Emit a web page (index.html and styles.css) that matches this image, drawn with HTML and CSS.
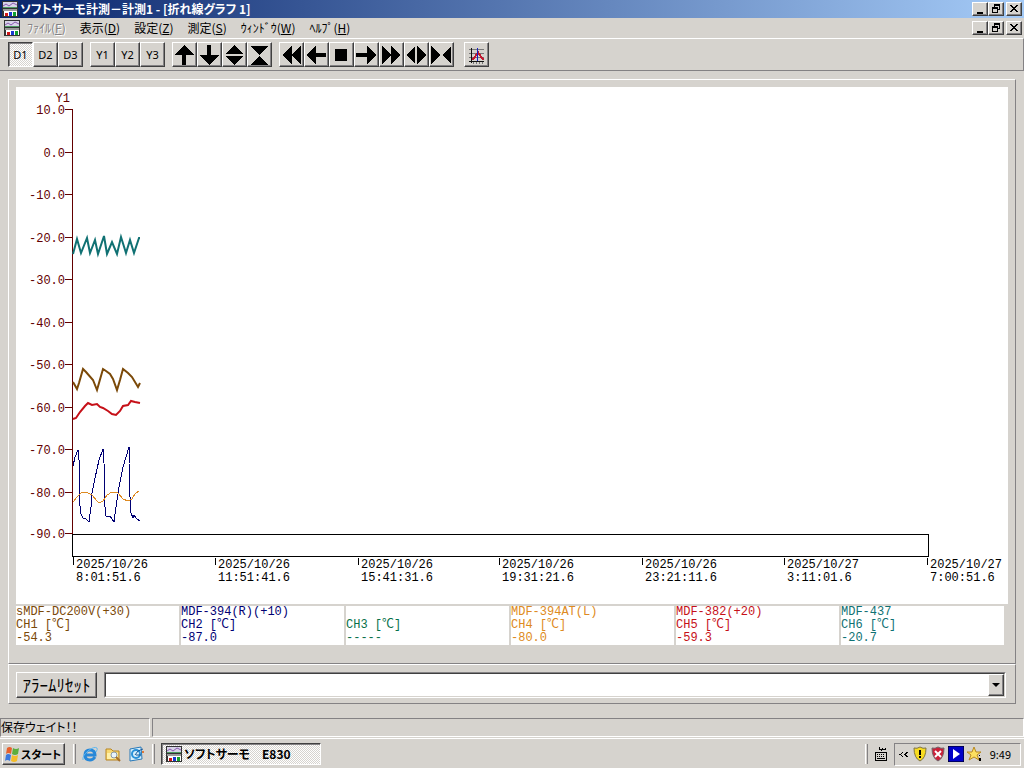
FILE: index.html
```html
<!DOCTYPE html>
<html lang="ja">
<head>
    <meta charset="UTF-8">
    <meta name="viewport" content="width=device-width, initial-scale=1">
    <title>ソフトサーモ E830</title>
    <link rel="stylesheet" href="styles.css">
</head>
<body>
    <svg class="defs" width="0" height="0" aria-hidden="true">
        <symbol id="app" viewBox="0 0 16 16">
            <path fill="#333" d="M0 0h16v16H0z"/>
            <path fill="#d8d4e8" d="M1 1h14v6H1z"/>
            <path fill="none" stroke="#8a58b0" d="M1 5l3-2 3 2 4-3 4 2"/>
            <path fill="none" stroke="#4c9a60" d="M1 6.500h14"/>
            <path fill="#9a9a9a" d="M1 8h14v2H1z"/>
            <path fill="#fff" d="M2 10h13v5H2z"/>
            <path fill="#d01818" d="M3 12h3v3H3z"/>
            <path fill="#1838d0" d="M7 11h3v4H7z"/>
            <path fill="#10a030" d="M11 11h3v4h-3z"/>
        </symbol>
        <symbol id="min" viewBox="0 0 12 10"><path d="M3 8h6v2H3z"/></symbol>
        <symbol id="restore" viewBox="0 0 12 10">
            <path fill-rule="evenodd" d="M4 0h6v6H8V9H2V3h2zM5 2v1h3v2h1V2zM3 5v3h4V5z"/>
        </symbol>
        <symbol id="close" viewBox="0 0 12 10">
            <path d="M2 1h2v1h1v1h2V2h1V1h2v1H9v1H8v1H7v1h1v1h1v1h1v1H8V7H7V6H5v1H4v1H2V7h1V6h1V5h1V4H4V3H3V2H2z"/>
        </symbol>
    </svg>

    <header class="titlebar">
        <svg class="app-icon"><use href="#app"/></svg>
        <h1>ソフトサーモ計測－計測1 - [折れ線グラフ 1]</h1>
        <div class="window-buttons">
            <button aria-label="最小化"><svg><use href="#min"/></svg></button>
            <button aria-label="元に戻す"><svg><use href="#restore"/></svg></button>
            <button class="close" aria-label="閉じる"><svg><use href="#close"/></svg></button>
        </div>
    </header>

    <nav class="menubar">
        <svg class="app-icon"><use href="#app"/></svg>
        <button disabled>ﾌｧｲﾙ(<u>F</u>)</button>
        <button>表示(<u>D</u>)</button>
        <button>設定(<u>Z</u>)</button>
        <button>測定(<u>S</u>)</button>
        <button>ｳｨﾝﾄﾞｳ(<u>W</u>)</button>
        <button>ﾍﾙﾌﾟ(<u>H</u>)</button>
        <div class="window-buttons">
            <button aria-label="最小化"><svg><use href="#min"/></svg></button>
            <button aria-label="元に戻す"><svg><use href="#restore"/></svg></button>
            <button class="close" aria-label="閉じる"><svg><use href="#close"/></svg></button>
        </div>
    </nav>

    <div class="toolbar">
        <div class="group">
            <button class="pressed">D1</button>
            <button>D2</button>
            <button>D3</button>
        </div>
        <div class="group">
            <button>Y1</button>
            <button>Y2</button>
            <button>Y3</button>
        </div>
        <div class="group">
            <button aria-label="上へ"><svg viewBox="0 0 22 22"><path d="M11 1l10 10h-8v10H9V11H1z"/></svg></button>
            <button aria-label="下へ"><svg viewBox="0 0 22 22"><path d="M11 21L1 11h8V1h4v10h8z"/></svg></button>
            <button aria-label="縦拡大"><svg viewBox="0 0 22 22"><path d="M11 1l9 9H2zM11 21l-9-9h18z"/></svg></button>
            <button aria-label="縦縮小"><svg viewBox="0 0 22 22"><path d="M2 2h18l-9 9zM2 21h18l-9-9z"/></svg></button>
        </div>
        <div class="group">
            <button aria-label="早戻し"><svg viewBox="0 0 22 22"><path d="M12 2v18l-10-9zM21 2v18l-10-9z"/></svg></button>
            <button aria-label="戻る"><svg viewBox="0 0 22 22"><path d="M1 11l10-9v7h10v4H11v7z"/></svg></button>
            <button aria-label="停止"><svg viewBox="0 0 22 22"><path d="M5 5h12v12H5z"/></svg></button>
            <button aria-label="進む"><svg viewBox="0 0 22 22"><path d="M21 11L12 2v7H1v4h11v7z"/></svg></button>
            <button aria-label="早送り"><svg viewBox="0 0 22 22"><path d="M2 2v18l10-9zM11 2v18l10-9z"/></svg></button>
            <button aria-label="横拡大"><svg viewBox="0 0 22 22"><path d="M10 2v18l-9-9zM12 2v18l9-9z"/></svg></button>
            <button aria-label="横縮小"><svg viewBox="0 0 22 22"><path d="M1 2v18l9-9zM21 2v18l-9-9z"/></svg></button>
        </div>
        <div class="group">
            <button aria-label="グラフ設定">
                <svg viewBox="0 0 22 22">
                    <path fill="none" stroke="#777" d="M4 5.500h15M4 9.500h15M4 13.500h15M8.500 18v2M11.500 18v2M14.500 18v2M17.500 18v2"/>
                    <path fill="none" stroke="#111" d="M6.500 4v15M4 17.500h15"/>
                    <path fill="none" stroke="#c01830" stroke-width="2" d="M7 16l3-3 3-5 3 5 3 3"/>
                    <path fill="none" stroke="#1820c0" d="M12.500 4v13"/>
                </svg>
            </button>
        </div>
    </div>

    <main>
        <section class="panel graph-panel">
            <svg class="chart" viewBox="0 0 992 517" role="img" aria-label="折れ線グラフ">
                <g class="y-axis">
                    <path d="M56.500 22v425M49 22.500h7M49 65.500h7M49 107.500h7M49 150.500h7M49 192.500h7M49 235.500h7M49 277.500h7M49 320.500h7M49 362.500h7M49 405.500h7M49 446.500h7"/>
                    <text x="54" y="15">Y1</text>
                    <text x="49" y="27">10.0</text>
                    <text x="49" y="70">0.0</text>
                    <text x="49" y="112">-10.0</text>
                    <text x="49" y="155">-20.0</text>
                    <text x="49" y="197">-30.0</text>
                    <text x="49" y="240">-40.0</text>
                    <text x="49" y="282">-50.0</text>
                    <text x="49" y="325">-60.0</text>
                    <text x="49" y="367">-70.0</text>
                    <text x="49" y="410">-80.0</text>
                    <text x="49" y="451">-90.0</text>
                </g>
                <g class="x-axis">
                    <rect x="56.500" y="447.500" width="856" height="22"/>
                    <path d="M57.500 470v8M199.500 471v7M342.500 471v7M483.500 471v7M626.500 471v7M768.500 471v7M911.500 471v7"/>
                    <text x="60" y="481">2025/10/26</text><text x="60" y="494">8:01:51.6</text>
                    <text x="202" y="481">2025/10/26</text><text x="202" y="494">11:51:41.6</text>
                    <text x="345" y="481">2025/10/26</text><text x="345" y="494">15:41:31.6</text>
                    <text x="486" y="481">2025/10/26</text><text x="486" y="494">19:31:21.6</text>
                    <text x="629" y="481">2025/10/26</text><text x="629" y="494">23:21:11.6</text>
                    <text x="771" y="481">2025/10/27</text><text x="771" y="494">3:11:01.6</text>
                    <text x="914" y="481">2025/10/27</text><text x="914" y="494">7:00:51.6</text>
                </g>
                <g class="series">
                    <polyline class="ch6 thick" points="57,167 61,152 65,166 71,151 74,166 79,153 82,167 88,149 91,167 96,155 101,167 105,150 110,166 114,153 118,166 123,151 124,151"/>
                    <polyline class="ch1 thick" points="57,295 61,302 63,296 67,282 70,285 77,293 81,303 83,296 87,282 90,284 94,287 97,292 101,303 104,293 107,282 112,286 116,290 122,300 124,296"/>
                    <polyline class="ch5 thick" points="57,332 60,331 64,325 69,319 72,316 76,318 81,317 84,320 87,321 92,324 96,327 100,328 104,324 107,319 112,318 115,314 119,315 124,316"/>
                    <polyline class="ch2" points="57,379 59,370 62,363 63,373 63,410 65,427 67,431 70,432 73,435 75,420 76,406 79,391 83,373 87,362 88,376 89,420 90,429 94,429 96,432 98,435 100,420 103,400 107,380 113,360 113,376 114,410 115,426 117,431 118,428 121,432 124,434"/>
                    <polyline class="ch4" points="57,415 61,410 65,406 70,405 76,408 81,414 83,416 87,414 91,408 96,405 102,406 107,412 112,414 116,412 119,407 123,404"/>
                </g>
            </svg>
            <div class="legend">
                <div class="ch1"><p>sMDF-DC200V(+30)</p><p>CH1 [℃]</p><p>-54.3</p></div>
                <div class="ch2"><p>MDF-394(R)(+10)</p><p>CH2 [℃]</p><p>-87.0</p></div>
                <div class="ch3"><p></p><p>CH3 [℃]</p><p>-----</p></div>
                <div class="ch4"><p>MDF-394AT(L)</p><p>CH4 [℃]</p><p>-80.0</p></div>
                <div class="ch5"><p>MDF-382(+20)</p><p>CH5 [℃]</p><p>-59.3</p></div>
                <div class="ch6"><p>MDF-437</p><p>CH6 [℃]</p><p>-20.7</p></div>
            </div>
        </section>

        <section class="panel alarm-panel">
            <button class="reset">ｱﾗｰﾑﾘｾｯﾄ</button>
            <div class="combo">
                <select aria-label="アラーム"><option></option></select>
                <span class="arrow"></span>
            </div>
        </section>
    </main>

    <div class="statusbar">
        <p class="message">保存ウェイト！！</p>
        <p class="rest"></p>
    </div>

    <footer class="taskbar">
        <button class="start">
            <svg viewBox="0 0 16 16">
                <path fill="#e8602c" d="M3 2q2.500-2 5 0L7 8q-3-2-5 0z"/>
                <path fill="#5cae3c" d="M9 2q3 2 6 0l-1 6q-3 2-6 0z"/>
                <path fill="#3c78dc" d="M2 9q2-2 5 0l-1 6q-3-2-5 0z"/>
                <path fill="#f4bc28" d="M8 9q3 2 6 0l-1 6q-3 2-6 0z"/>
            </svg>
            スタート
        </button>
        <span class="grip"></span>
        <div class="quick">
            <a href="#" aria-label="Internet Explorer">
                <svg viewBox="0 0 16 16">
                    <path fill="none" stroke="#2888d8" stroke-width="3" d="M13 11q-2 3-5 3-5 0-5-5t5-5q5 0 5 5H4"/>
                    <path fill="none" stroke="#60b8f0" d="M1 14Q0 10 6 5t9-3q1 1-1 4"/>
                </svg>
            </a>
            <a href="#" aria-label="エクスプローラ">
                <svg viewBox="0 0 16 16">
                    <path fill="#f8d870" stroke="#b88420" d="M1 3h5l2 2h6v9H1z"/>
                    <path fill="#fff0a8" d="M2 7h11v6H2z"/>
                    <circle cx="9" cy="9" r="3" fill="#e8f4fc" stroke="#8898a8"/>
                    <path stroke="#a87028" stroke-width="2" d="M11 11l4 4"/>
                </svg>
            </a>
            <a href="#" aria-label="Outlook Express">
                <svg viewBox="0 0 16 16">
                    <path fill="#d8f0fc" stroke="#2878b8" d="M2 3l11-2 1 12-12 2z"/>
                    <circle cx="8" cy="8" r="4" fill="none" stroke="#2890d8" stroke-width="2"/>
                    <path fill="none" stroke="#185898" d="M7 9l3-4 5-2M8 9h5"/>
                    <path fill="#e07838" d="M14 5h2v2h-2z"/>
                </svg>
            </a>
        </div>
        <span class="grip"></span>
        <button class="task"><svg class="app-icon"><use href="#app"/></svg>ソフトサーモ　E830</button>
        <div class="notify">
            <span class="grip"></span>
            <svg class="keyboard" viewBox="0 0 14 14">
                <path d="M5 0h1v2h2V1h1v1h2V1h1v2H8v1H7V3H5z"/>
                <path fill-rule="evenodd" d="M1 5h12v9H1zM2 6v7h10V6z"/>
                <path d="M3 7h1v1H3zM5 7h1v1H5zM7 7h1v1H7zM9 7h1v1H9zM3 9h1v1H3zM5 9h1v1H5zM7 9h1v1H7zM9 9h1v1H9zM3 11h8v1H3z"/>
            </svg>
            <div class="tray">
                <svg class="chevron" viewBox="0 0 9 7"><path d="M3 1h1v1H3v1H2v1h1v1h1v1H3V5H2V4H0V3h2V2h1zM7 1h2v1H8v1H7v1h1v1h1v1H7V5H6V4H5V3h1V2h1z"/></svg>
                <svg viewBox="0 0 16 16">
                    <path fill="#f8dc20" stroke="#807440" d="M8 1q3 2 6 1 0 10-6 13-6-3-6-13 3 1 6-1z"/>
                    <path d="M7 4h2v5H7zM7 10h2v2H7z"/>
                </svg>
                <svg viewBox="0 0 16 16">
                    <path fill="#cc2038" stroke="#706068" d="M8 1q3 2 6 1 0 10-6 13-6-3-6-13 3 1 6-1z"/>
                    <path stroke="#fff" stroke-width="2" d="M5 5l6 6M11 5l-6 6"/>
                </svg>
                <svg viewBox="0 0 16 16">
                    <path fill="#0000c8" stroke="#000" d="M0 0h16v16H0z"/>
                    <path fill="#fff" d="M5 3l7 5-7 5z"/>
                </svg>
                <svg viewBox="0 0 16 16">
                    <path fill="#fce060" stroke="#b88820" d="M8 1l2 5h5l-4 3 2 5-5-3-5 3 2-5-4-3h5z"/>
                    <path d="M13 9h1v1h-1zM13 12h2v3h-2z"/>
                </svg>
                <time>9:49</time>
            </div>
        </div>
    </footer>
</body>
</html>
```

FILE: styles.css
```css
* {
    box-sizing: border-box;
}

body {
    margin: 0;
    min-height: 100vh;
    display: flex;
    flex-direction: column;
    background: #d6d3ce;
    color: #000;
    font-family: "Noto Sans CJK JP", sans-serif;
    font-size: 12px;
    line-height: 16px;
    font-feature-settings: "palt";
}

h1, p {
    margin: 0;
}

button {
    font: inherit;
    font-feature-settings: inherit;
    color: inherit;
    padding: 0;
    border: 1px solid;
    border-color: #fff #404040 #404040 #fff;
    box-shadow: inset -1px -1px #848284;
    background: #d6d3ce;
}

svg {
    display: block;
    flex: none;
}

.defs {
    position: absolute;
}

.app-icon {
    width: 16px;
    height: 16px;
}

/* title and menu */
.titlebar {
    display: flex;
    align-items: center;
    height: 18px;
    padding: 0 2px;
    gap: 2px;
    background: linear-gradient(to right, #08246b, #a5cbf7);
    color: #fff;
}

.titlebar h1 {
    font-size: 12px;
    line-height: 16px;
    white-space: nowrap;
}

.window-buttons {
    display: flex;
    margin-left: auto;
}

.window-buttons button {
    width: 16px;
    height: 14px;
    padding: 1px;
    color: #000;
}

.window-buttons svg {
    width: 12px;
    height: 10px;
    shape-rendering: crispEdges;
}

.window-buttons .close {
    margin-left: 2px;
}

.menubar {
    display: flex;
    align-items: center;
    height: 20px;
    padding: 0 2px 0 4px;
}

.menubar > button {
    padding: 0 7px;
    border: 0;
    box-shadow: none;
    white-space: nowrap;
}

.menubar > button:disabled {
    color: #848284;
    text-shadow: 1px 1px #fff;
}

/* toolbar */
.toolbar {
    display: flex;
    gap: 7px;
    height: 33px;
    padding: 3px 8px;
    border-top: 1px solid #fff;
    border-right: 1px solid #848284;
    border-bottom: 1px solid #848284;
}

.group {
    display: flex;
}

.group:last-child {
    margin-left: 3px;
}

.group button {
    width: 25px;
    height: 25px;
    font-family: "Noto Sans", sans-serif;
    font-size: 11px;
}

.group button svg {
    width: 22px;
    height: 22px;
    shape-rendering: crispEdges;
}

.group .pressed {
    border-color: #404040 #fff #fff #404040;
    box-shadow: inset 1px 1px #848284;
    background: repeating-conic-gradient(#fff 0 25%, #d6d3ce 0 50%) 0 0 / 2px 2px;
}

/* panels */
main {
    padding: 8px;
}

.panel {
    border: 1px solid;
    border-color: #fff #848284 #848284 #fff;
    padding: 7px;
}

.graph-panel {
    padding-bottom: 18px;
}

.chart {
    width: 100%;
    height: auto;
    background: #fff;
    shape-rendering: crispEdges;
}

.chart text,
.legend {
    font-family: "Liberation Mono", "Noto Sans CJK JP", monospace;
    font-size: 12px;
}

.y-axis path {
    stroke: #630000;
}

.y-axis text {
    fill: #630000;
    text-anchor: end;
}

.x-axis rect,
.x-axis path {
    fill: none;
    stroke: #000;
}

.series polyline {
    fill: none;
    stroke: currentColor;
}

.series .thick {
    stroke-width: 2;
    shape-rendering: auto;
}

.ch1 { color: #7b4908; }
.ch2 { color: #000073; }
.ch3 { color: #08714a; }
.ch4 { color: #de8a21; }
.ch5 { color: #c61018; }
.ch6 { color: #107173; }

.legend {
    display: grid;
    grid-template-columns: repeat(6, 1fr);
    gap: 2px;
    margin: 2px 4px 0 0;
    line-height: 13px;
}

.legend div {
    background: #fff;
}

.legend p {
    height: 13px;
    white-space: nowrap;
}

.alarm-panel {
    display: flex;
    align-items: center;
    gap: 7px;
    padding: 7px 9px 5px 7px;
}

.reset {
    width: 81px;
    height: 26px;
    font-size: 17px;
    line-height: 20px;
    white-space: nowrap;
}

.combo {
    flex: 1;
    position: relative;
    height: 26px;
    border: 1px solid;
    border-color: #848284 #fff #fff #848284;
}

.combo select {
    appearance: none;
    display: block;
    width: 100%;
    height: 100%;
    border: 1px solid;
    border-color: #404040 #d6d3ce #d6d3ce #404040;
    border-radius: 0;
    background: #fff;
    font: inherit;
}

.arrow {
    position: absolute;
    top: 1px;
    right: 1px;
    bottom: 1px;
    width: 16px;
    display: grid;
    place-items: center;
    border: 1px solid;
    border-color: #fff #404040 #404040 #fff;
    box-shadow: inset -1px -1px #848284;
    background: #d6d3ce;
    pointer-events: none;
}

.arrow::before {
    content: "";
    border: 4px solid transparent;
    border-top-color: #000;
    border-bottom: 0;
}

/* status bar */
.statusbar {
    display: flex;
    gap: 2px;
    margin-top: auto;
}

.statusbar p {
    height: 19px;
    border: 1px solid;
    border-color: #848284 #fff #fff #848284;
}

.statusbar .message {
    width: 150px;
}

.statusbar .rest {
    flex: 1;
}

/* taskbar */
.taskbar {
    display: flex;
    align-items: center;
    gap: 6px;
    height: 30px;
    margin-top: 1px;
    padding: 1px 3px 0 2px;
    border-top: 1px solid #fff;
}

.start,
.task {
    display: flex;
    align-items: center;
    gap: 2px;
    height: 22px;
    padding: 0 2px;
    font-weight: bold;
    white-space: nowrap;
}

.start {
    width: 63px;
    gap: 1px;
    padding: 0 1px;
    font-size: 11px;
}

.start svg {
    width: 16px;
    height: 16px;
}

.grip {
    width: 3px;
    height: 20px;
    margin-left: 2px;
    border-left: 1px solid #fff;
    border-right: 1px solid #848284;
}

.quick {
    display: flex;
    gap: 7px;
}

.quick svg {
    width: 16px;
    height: 16px;
}

.task {
    width: 160px;
    padding: 0 4px;
    border-color: #404040 #fff #fff #404040;
    box-shadow: inset 1px 1px #848284;
    background: repeating-conic-gradient(#fff 0 25%, #d6d3ce 0 50%) 0 0 / 2px 2px;
}

.notify {
    display: flex;
    align-items: center;
    gap: 6px;
    margin-left: auto;
}

.keyboard {
    width: 14px;
    height: 14px;
    shape-rendering: crispEdges;
}

.tray {
    display: flex;
    align-items: center;
    gap: 2px;
    height: 23px;
    padding: 0 9px 0 4px;
    border: 1px solid;
    border-color: #848284 #fff #fff #848284;
}

.tray svg {
    width: 16px;
    height: 16px;
}

.tray .chevron {
    width: 9px;
    height: 7px;
    margin-right: 2px;
    shape-rendering: crispEdges;
}

.tray time {
    margin-left: 6px;
    font-size: 11px;
}
```
